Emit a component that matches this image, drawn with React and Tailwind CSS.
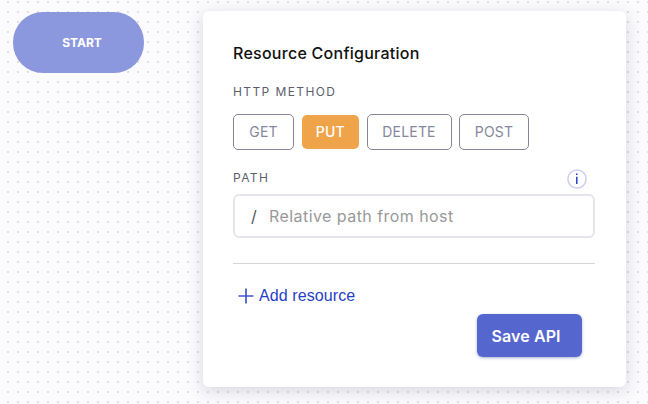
const METHODS = [
  { name: "GET", style: "w-[61px] h-9 border border-[#858699] text-[#85879d]" },
  { name: "PUT", style: "w-[57.5px] h-[34px] bg-[#efa44a] text-white font-medium" },
  { name: "DELETE", style: "w-[85px] h-9 border border-[#858699] text-[#85879d]" },
  { name: "POST", style: "w-[70px] h-9 border border-[#858699] text-[#85879d]" },
];

function MethodButton({ name, style }) {
  return (
    <button className={`flex items-center justify-center rounded-[5px] text-[14px] leading-none tracking-[0.2px] ${style}`}>
      {name}
    </button>
  );
}

export default function App() {
  return (
    <main className="flex h-[404px] w-[648px] items-start overflow-hidden bg-[#fbfbfd] bg-[conic-gradient(from_90deg_at_8px_8px,#e0e0e3_25%,#fbfbfd_0)] bg-[length:10px_10px] bg-[position:-1px_3px] pl-[13px] pt-[11px] font-['Inter',sans-serif]">
      <div className="mt-px flex h-[61px] w-[131px] shrink-0 items-center justify-center rounded-[30px] bg-[#8c98de] pl-[7px] text-[12px] font-bold text-white">
        START
      </div>
      <section className="ml-[59px] flex h-[376px] w-[423px] shrink-0 flex-col rounded-[6px] bg-white pl-[30px] pr-[31px] pt-[32px] shadow-[0_4px_16px_rgba(70,65,110,0.2)]">
        <h1 className="h-5 whitespace-nowrap text-[16px] font-medium leading-5 tracking-[0.26px] text-[#111]">Resource Configuration</h1>
        <div className="mt-[21px] h-4 text-[12px] leading-4 tracking-[1.4px] text-[#5c5e6c]">HTTP METHOD</div>
        <div className="mt-[14px] flex h-9 items-center gap-[7.5px]">
          {METHODS.map((m) => (
            <MethodButton key={m.name} {...m} />
          ))}
        </div>
        <div className="mt-[18px] flex h-5 items-center justify-between pr-2">
          <span className="text-[12px] tracking-[1.4px] text-[#5c5e6c]">PATH</span>
          <svg className="mt-[2px]" width="20" height="20" viewBox="0 0 20 20" fill="none">
            <circle cx="10" cy="10" r="9.1" stroke="#cacff2" strokeWidth="1.5" />
            <path d="M9.8 7.7V15" stroke="#1833c8" strokeWidth="1.4" />
            <path d="M9.8 4.4V6" stroke="#1833c8" strokeWidth="1.5" />
          </svg>
        </div>
        <div className="mt-[6px] flex h-[44px] items-center rounded-[6px] border-2 border-[#e5e6eb] pl-4 text-[16px]">
          <span className="w-[18px] text-[#555]">/</span>
          <span className="whitespace-nowrap tracking-[0.44px] text-[#999]">Relative path from host</span>
        </div>
        <hr className="mt-[25px] border-0 border-t border-[#d6d6da]" />
        <button className="mt-[22px] flex h-5 items-center pl-[5px] font-['Liberation_Sans',Arial,sans-serif] text-[16px] leading-5 tracking-[0.1px] text-[#263fc6]">
          <svg className="mr-[5px]" width="16" height="16" viewBox="0 0 16 16">
            <path d="M8 .5v15M.5 8h15" stroke="#4255cc" strokeWidth="1.7" />
          </svg>
          Add resource
        </button>
        <button className="mr-[13.5px] mt-2 flex h-[43px] w-[105px] items-center self-end rounded-[6px] bg-[#5567cf] pl-[15px] pt-px text-[16px] font-semibold tracking-[0.1px] text-white shadow-[0_1px_3px_rgba(50,60,150,0.4)]">
          Save API
        </button>
      </section>
    </main>
  );
}
